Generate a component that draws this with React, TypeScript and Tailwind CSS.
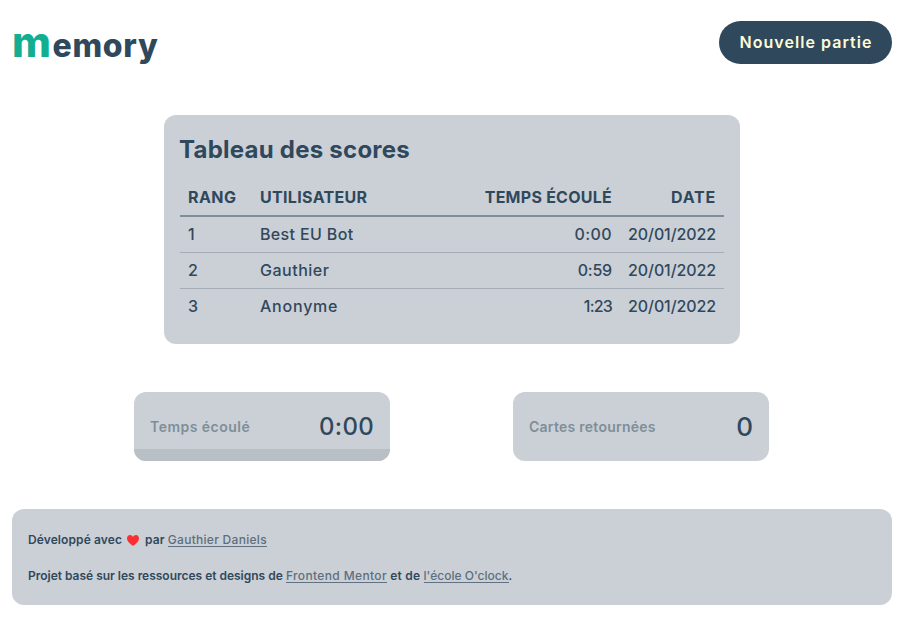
import type { ReactNode } from "react";

type Score = { rank: number; user: string; userClass: string; time: string; timeClass: string; date: string };

const scores: Score[] = [
  { rank: 1, user: "Best EU Bot", userClass: "tracking-[0.35px]", time: "0:00", timeClass: "tracking-[0.4px]", date: "20/01/2022" },
  { rank: 2, user: "Gauthier", userClass: "tracking-[0.5px]", time: "0:59", timeClass: "tracking-[-0.2px]", date: "20/01/2022" },
  { rank: 3, user: "Anonyme", userClass: "tracking-[0.78px]", time: "1:23", timeClass: "tracking-[-0.8px]", date: "20/01/2022" },
];

function Link({ className, children }: { className: string; children: ReactNode }) {
  return (
    <a href="#" className={`inline-block h-[14px] border-b border-[#5f7182] leading-[13px] text-[#5d6e7d] ${className}`}>
      {children}
    </a>
  );
}

function Heart() {
  return (
    <svg viewBox="0 0 12 11" className="mr-[6px] ml-[5px] inline-block h-[11px] w-3 align-[-1.5px]" fill="#fb2f31">
      <path d="M6 11C5.2 10.3 0 7.2 0 3.3C0 1.3 1.3 0 3 0C4.400 0 5.500.8 6 1.900C6.500.8 7.600 0 9 0C10.700 0 12 1.300 12 3.300C12 7.200 6.800 10.300 6 11Z" />
    </svg>
  );
}

export default function App() {
  return (
    <div className="h-[621px] w-[892px] bg-white pt-[21px] pl-3 font-['Inter','Liberation_Sans',sans-serif] font-medium whitespace-nowrap text-[#30485c]">
      <header className="flex h-[43px] justify-between">
        <h1 className="flex items-baseline leading-[41px]">
          <span className="text-[42px] font-extrabold tracking-[1.6px] text-[#12ae91]">m</span>
          <span className="text-[32px] font-extrabold tracking-[0.7px]">emory</span>
        </h1>
        <button className="h-[43px] w-[173px] rounded-full bg-[#30485c] pb-[2px] pl-px text-base font-semibold tracking-[1.05px] text-[#fcfcd8]">
          Nouvelle partie
        </button>
      </header>

      <main className="mt-[51px]">
        <section className="mx-auto h-[229px] w-[576px] rounded-xl bg-[#cbd0d6] px-4 pt-[19px]">
          <h2 className="-ml-px h-[44px] text-[24px] leading-8 font-bold tracking-[0.24px]">Tableau des scores</h2>
          <table className="w-full table-fixed border-collapse text-base leading-6">
            <thead>
              <tr className="h-[38px] border-b-2 border-[#7f8d99] font-bold">
                <th className="w-[72px] px-2 text-left tracking-[0.45px]">RANG</th>
                <th className="px-2 text-left tracking-[0.33px]">UTILISATEUR</th>
                <th className="w-[150px] px-2 text-right tracking-[0.25px]">TEMPS ÉCOULÉ</th>
                <th className="w-[104px] px-2 text-right tracking-[0.8px]">DATE</th>
              </tr>
            </thead>
            <tbody>
              {scores.map((s) => (
                <tr key={s.rank} className="h-9 border-b border-[#a4acb6] last:border-0">
                  <td className="px-2">{s.rank}</td>
                  <td className={`px-2 ${s.userClass}`}>{s.user}</td>
                  <td className={`px-2 text-right ${s.timeClass}`}>{s.time}</td>
                  <td className="px-2 text-right tracking-[-0.1px]">{s.date}</td>
                </tr>
              ))}
            </tbody>
          </table>
        </section>

        <section className="mt-12 mr-[123px] ml-[122px] flex justify-between">
          <div className="flex h-[69px] w-64 flex-col overflow-hidden rounded-xl bg-[#cbd0d6]">
            <div className="flex h-[57px] items-center justify-between px-4 pt-[12px]">
              <span className="text-sm font-semibold tracking-[0.48px] text-[#7e8e99]">Temps écoulé</span>
              <span className="text-2xl tracking-[0.3px]">0:00</span>
            </div>
            <div className="h-3 bg-[#b8bfc5]" />
          </div>
          <div className="flex h-[69px] w-64 items-center justify-between rounded-xl bg-[#cbd0d6] px-4">
            <span className="text-sm font-semibold tracking-[0.26px] text-[#7e8e99]">Cartes retournées</span>
            <span className="text-[26px]">0</span>
          </div>
        </section>
      </main>

      <footer className="mt-12 flex h-24 flex-col gap-3 rounded-xl bg-[#cbd0d6] px-4 pt-[19px] text-xs leading-6">
        <p className="h-6">
          <span className="font-semibold tracking-[0.1px]">Développé avec</span>
          <Heart />
          <span className="font-semibold tracking-[0.1px]">par</span> <Link className="tracking-[0.29px]">Gauthier Daniels</Link>
        </p>
        <p className="h-6">
          <span className="font-semibold tracking-[-0.01px]">Projet basé sur les ressources et designs de</span>{" "}
          <Link className="tracking-[0.36px]">Frontend Mentor</Link>{" "}
          <span className="font-semibold tracking-[0.25px]">et de</span>{" "}
          <Link className="tracking-[0.02px]">l'école O'clock</Link>.
        </p>
      </footer>
    </div>
  );
}
